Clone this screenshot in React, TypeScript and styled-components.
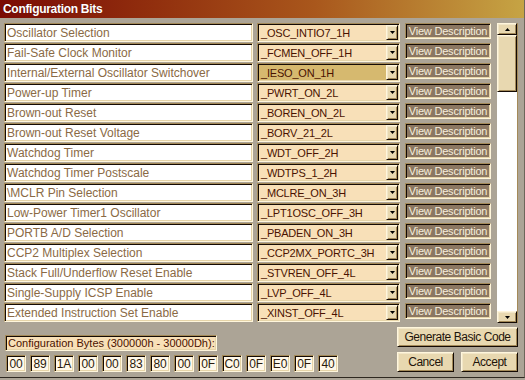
import React from "react";
import styled, { createGlobalStyle, css } from "styled-components";

const GlobalStyle = createGlobalStyle`
  html, body { margin: 0; padding: 0; background: #aca496; }
  * { box-sizing: border-box; }
  body {
    font-family: "Liberation Sans", Arial, sans-serif;
    font-size: 11px;
    letter-spacing: -0.2px;
  }
`;

const sunken = css`
  border-style: solid;
  border-width: 1px;
  border-color: #a48a58 #fff6dc #fff6dc #a48a58;
  box-shadow: inset 1px 1px 0 #140a04, inset -1px -1px 0 #e6d4a8;
`;

const raised = css`
  border-style: solid;
  border-width: 1px;
  border-color: #fff6dc #140a04 #140a04 #fff6dc;
  box-shadow: inset 1px 1px 0 #f2e6c8, inset -1px -1px 0 #a48a58;
`;

const Window = styled.div`
  width: 525px;
  height: 378px;
  background: #aca496;
  border-bottom: 1px solid #2e2820;
  border-right: 1px solid #6e665a;
  display: flex;
  flex-direction: column;
`;

const TitleBar = styled.div`
  height: 18px;
  padding-left: 3px;
  display: flex;
  align-items: center;
  background: linear-gradient(to right, #7a0a04 0%, #92300e 30%, #a9571c 60%, #c6a444 100%);
  color: #ffffff;
  font-weight: bold;
  font-size: 12px;
  letter-spacing: -0.3px;
  text-shadow: 0 0 1px rgba(60, 0, 0, 0.6);
`;

const Body = styled.div`
  display: flex;
  gap: 5px;
  padding: 5px 6px 0 4px;
`;

const Rows = styled.div`
  display: flex;
  flex-direction: column;
  gap: 1px;
  width: 488px;
`;

const Row = styled.div`
  display: grid;
  grid-template-columns: 249px 143px 87px;
  column-gap: 4px;
  height: 19px;
  & > :nth-child(3) { margin-left: 1px; }
`;

const Label = styled.div`
  ${sunken};
  background: #ffffff;
  color: #8a6a45;
  font-size: 12px;
  letter-spacing: 0;
  padding: 0 0 0 2px;
  display: flex;
  align-items: center;
  white-space: nowrap;
  overflow: hidden;
`;

const Combo = styled.div`
  ${sunken};
  background: #f8e0b8;
  display: flex;
  padding: 1px;
`;

const ComboText = styled.div<{ $selected?: boolean }>`
  flex: 1;
  display: flex;
  align-items: center;
  padding-left: 2px;
  color: #4a1200;
  background: ${(p) => (p.$selected ? "#d6b96f" : "transparent")};
  white-space: nowrap;
`;

const ArrowButton = styled.div`
  ${raised};
  width: 12px;
  background: #e8d8b0;
  display: flex;
  align-items: center;
  justify-content: center;
`;

const ViewButton = styled.div`
  ${sunken};
  height: 16px;
  background: #8b7762;
  color: #f6eedc;
  display: flex;
  align-items: center;
  justify-content: center;
  white-space: nowrap;
`;

const ScrollBar = styled.div`
  width: 21px;
  height: 300px;
  display: flex;
  flex-direction: column;
  background: #ffffff;
  border-right: 1px solid #a48a58;
`;

const ScrollButton = styled.div`
  ${raised};
  height: 12px;
  background: #e8d8b0;
  display: flex;
  align-items: center;
  justify-content: center;
`;

const Thumb = styled.div`
  ${raised};
  height: 57px;
  background: #e8d8b0;
`;

const Track = styled.div`
  flex: 1;
  background: #ffffff;
`;

const Footer = styled.div`
  display: flex;
  justify-content: space-between;
  padding: 4px 6px 0 5px;
`;

const BytesGroup = styled.div`
  display: flex;
  flex-direction: column;
  gap: 4px;
  padding-top: 8px;
`;

const BytesLabel = styled.div`
  ${sunken};
  width: 212px;
  height: 16px;
  background: #f8e0b8;
  color: #4a1200;
  letter-spacing: 0;
  padding-left: 2px;
  display: flex;
  align-items: center;
  white-space: nowrap;
`;

const HexRow = styled.div`
  display: flex;
  gap: 4px;
  margin-left: 1px;
`;

const HexBox = styled.div`
  ${sunken};
  width: 20px;
  height: 17px;
  background: #fff8ea;
  color: #2a1a0c;
  font-size: 12px;
  display: flex;
  align-items: center;
  justify-content: center;
`;

const ButtonGroup = styled.div`
  display: grid;
  grid-template-columns: 57px 57px;
  column-gap: 7px;
  row-gap: 4px;
  width: 121px;
`;

const Button = styled.div<{ $wide?: boolean }>`
  ${raised};
  grid-column: ${(p) => (p.$wide ? "1 / span 2" : "auto")};
  height: 20px;
  background: #e8d8b0;
  color: #1e140a;
  font-size: 12px;
  letter-spacing: -0.45px;
  display: flex;
  align-items: center;
  justify-content: center;
  white-space: nowrap;
`;

const Tri = ({ up }: { up?: boolean }) => (
  <svg width="5" height="3" viewBox="0 0 5 3">
    <polygon points={up ? "0,3 5,3 2.5,0" : "0,0 5,0 2.5,3"} fill="#000" />
  </svg>
);

const rows: [string, string][] = [
  ["Oscillator Selection", "_OSC_INTIO7_1H"],
  ["Fail-Safe Clock Monitor", "_FCMEN_OFF_1H"],
  ["Internal/External Oscillator Switchover", "_IESO_ON_1H"],
  ["Power-up Timer", "_PWRT_ON_2L"],
  ["Brown-out Reset", "_BOREN_ON_2L"],
  ["Brown-out Reset Voltage", "_BORV_21_2L"],
  ["Watchdog Timer", "_WDT_OFF_2H"],
  ["Watchdog Timer Postscale", "_WDTPS_1_2H"],
  ["\\MCLR Pin Selection", "_MCLRE_ON_3H"],
  ["Low-Power Timer1 Oscillator", "_LPT1OSC_OFF_3H"],
  ["PORTB A/D Selection", "_PBADEN_ON_3H"],
  ["CCP2 Multiplex Selection", "_CCP2MX_PORTC_3H"],
  ["Stack Full/Underflow Reset Enable", "_STVREN_OFF_4L"],
  ["Single-Supply ICSP Enable", "_LVP_OFF_4L"],
  ["Extended Instruction Set Enable", "_XINST_OFF_4L"],
];

const bytes = ["00", "89", "1A", "00", "00", "83", "80", "00", "0F", "C0", "0F", "E0", "0F", "40"];

export default function App() {
  return (
    <>
      <GlobalStyle />
      <Window>
        <TitleBar>Configuration Bits</TitleBar>
        <Body>
          <Rows>
            {rows.map(([label, value], i) => (
              <Row key={label}>
                <Label>{label}</Label>
                <Combo>
                  <ComboText $selected={i === 2}>{value}</ComboText>
                  <ArrowButton>
                    <Tri />
                  </ArrowButton>
                </Combo>
                <ViewButton>View Description</ViewButton>
              </Row>
            ))}
          </Rows>
          <ScrollBar>
            <ScrollButton>
              <Tri up />
            </ScrollButton>
            <Thumb />
            <Track />
            <ScrollButton>
              <Tri />
            </ScrollButton>
          </ScrollBar>
        </Body>
        <Footer>
          <BytesGroup>
            <BytesLabel>Configuration Bytes (300000h - 30000Dh):</BytesLabel>
            <HexRow>
              {bytes.map((b, i) => (
                <HexBox key={i}>{b}</HexBox>
              ))}
            </HexRow>
          </BytesGroup>
          <ButtonGroup>
            <Button $wide>Generate Basic Code</Button>
            <Button>Cancel</Button>
            <Button>Accept</Button>
          </ButtonGroup>
        </Footer>
      </Window>
    </>
  );
}
